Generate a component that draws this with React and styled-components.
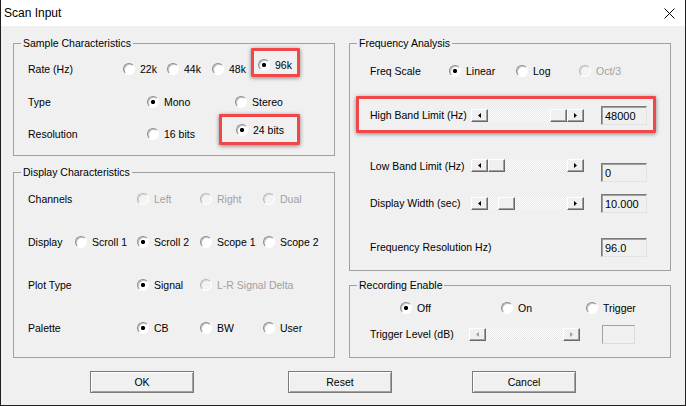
import React from "react";
import styled, { createGlobalStyle } from "styled-components";

const GlobalStyle = createGlobalStyle`
  html, body { margin: 0; padding: 0; background: #fff; }
  body {
    font-family: "Liberation Sans", Arial, sans-serif;
    font-size: 10.5px;
    color: #000;
  }
  * { box-sizing: border-box; }
`;

const Window = styled.div`
  width: 686px;
  height: 406px;
  border: 1px solid #1f1f1f;
  border-top: none;
  display: flex;
  flex-direction: column;
  background: #f0f0f0;
`;

const TitleBar = styled.div`
  height: 26px;
  flex: none;
  background: #fff;
  display: flex;
  align-items: center;
  justify-content: space-between;
  padding: 0 10px 0 3px;
  font-size: 12px;
`;

const Body = styled.div`
  flex: 1;
  display: flex;
  flex-direction: column;
  padding: 10px 13px 0 12px;
`;

const Columns = styled.div`
  display: grid;
  grid-template-columns: 322px 322px;
  column-gap: 14px;
  align-items: start;
`;

const Column = styled.div`
  display: flex;
  flex-direction: column;
`;

const Group = styled.fieldset`
  margin: ${(p) => p.$mt || 0}px 0 0;
  padding: 0;
  border: 1px solid #a0a0a0;
  min-width: 0;
`;

const Legend = styled.legend`
  margin-left: 7px;
  padding: 0 2px;
  line-height: 14px;
  font-size: 10.5px;
`;

const GroupBody = styled.div`
  display: flex;
  flex-direction: column;
  gap: ${(p) => p.$gap}px;
  padding: ${(p) => p.$pad};
`;

const Row = styled.div`
  display: grid;
  grid-template-columns: ${(p) => p.$cols};
  height: 20px;
  align-items: center;
  justify-items: start;
`;

const Label = styled.span`
  white-space: nowrap;
  color: ${(p) => (p.$off ? "#a0a0a0" : "#000")};
`;

const Option = styled.label`
  display: inline-flex;
  align-items: center;
  gap: 5px;
  white-space: nowrap;
  color: ${(p) => (p.$off ? "#a0a0a0" : "#000")};
`;

const Dot = styled.span`
  width: 12px;
  height: 12px;
  flex: none;
  border-radius: 50%;
  border: 1px solid;
  border-color: ${(p) => (p.$off ? "#b4b4b4 #fff #fff #b4b4b4" : "#8c8c8c #fff #fff #8c8c8c")};
  box-shadow: inset 1px 1px ${(p) => (p.$off ? "#dcdcdc" : "#c4c4c4")};
  background: ${(p) =>
    p.$on
      ? `radial-gradient(circle, #000 0 1.8px, #fff 2.4px)`
      : p.$off
      ? "#f4f4f4"
      : "#fff"};
`;

const Highlight = styled.div`
  position: relative;
  justify-self: start;
  align-self: flex-start;
  &::after {
    content: "";
    position: absolute;
    top: ${(p) => p.$t}px;
    right: ${(p) => p.$r}px;
    bottom: ${(p) => p.$b}px;
    left: ${(p) => p.$l}px;
    border: 3px solid #f04848;
    border-radius: 1px;
    box-shadow: 0 1px 4px rgba(0, 0, 0, 0.45);
    pointer-events: none;
  }
`;

const Scroll = styled.div`
  display: flex;
  width: 100%;
  height: 13px;
`;

const raised = `
  background: #f0f0f0;
  border: 1px solid;
  border-color: #fff #696969 #696969 #fff;
  box-shadow: inset -1px -1px #a0a0a0;
`;

const Arrow = styled.div`
  ${raised}
  width: 17px;
  flex: none;
  display: flex;
  align-items: center;
  justify-content: center;
`;

const Track = styled.div`
  flex: 1;
  display: flex;
  background: repeating-conic-gradient(#fff 0 25%, #e6e6e6 0 50%) 0 0 / 2px 2px;
`;

const Thumb = styled.div`
  ${raised}
  width: 17px;
  flex: none;
  margin-left: calc((100% - 17px) * ${(p) => p.$pos});
`;

const Edit = styled.div`
  width: 100%;
  height: 19px;
  margin-top: ${(p) => p.$drop || 0}px;
  padding: 2px 0 0 3px;
  background: #f0f0f0;
  border: 1px solid;
  border-color: ${(p) => (p.$off ? "#a0a0a0 #dcdcdc #dcdcdc #a0a0a0" : "#7a7a7a #e3e3e3 #e3e3e3 #7a7a7a")};
  box-shadow: ${(p) => (p.$off ? "none" : "inset 1px 1px #a0a0a0")};
  font-size: 11px;
  line-height: 14px;
`;

const ButtonBar = styled.div`
  display: grid;
  grid-template-columns: 198px 184px 104px;
  margin-top: 13px;
  padding-left: 77px;
`;

const Button = styled.button`
  width: 104px;
  height: 22px;
  padding: 0;
  font-family: inherit;
  font-size: 10.5px;
  color: #000;
  background: #f0f0f0;
  border: 1px solid #7a7a7a;
  box-shadow: inset 1px 1px #fff, inset -1px -1px #a0a0a0;
`;

const Tri = ({ dir, off }) => (
  <svg width="3" height="5" viewBox="0 0 3 5">
    <polygon
      points={dir === "left" ? "3,0 0,2.5 3,5" : "0,0 3,2.5 0,5"}
      fill={off ? "#a0a0a0" : "#000"}
    />
  </svg>
);

const Slider = ({ pos, off }) => (
  <Scroll>
    <Arrow>
      <Tri dir="left" off={off} />
    </Arrow>
    <Track>{!off && <Thumb $pos={pos} />}</Track>
    <Arrow>
      <Tri dir="right" off={off} />
    </Arrow>
  </Scroll>
);

const Radio = ({ on, off, children }) => (
  <Option $off={off}>
    <Dot $on={on} $off={off} />
    {children}
  </Option>
);

const CloseIcon = () => (
  <svg width="11" height="11" viewBox="0 0 11 11">
    <path d="M0.5 0.5 L10.5 10.5 M10.5 0.5 L0.5 10.5" stroke="#000" strokeWidth="1" />
  </svg>
);

export default function App() {
  return (
    <>
      <GlobalStyle />
      <Window>
        <TitleBar>
          <span>Scan Input</span>
          <CloseIcon />
        </TitleBar>
        <Body>
          <Columns>
            <Column>
              <Group>
                <Legend>Sample Characteristics</Legend>
                <GroupBody $gap={12.5} $pad="9px 0 11px 14px">
                  <Row $cols="95px 44px 45px 46px auto">
                    <Label>Rate (Hz)</Label>
                    <Radio>22k</Radio>
                    <Radio>44k</Radio>
                    <Radio>48k</Radio>
                    <Highlight $t={-11} $r={-8} $b={-4} $l={-7}>
                      <Radio on>96k</Radio>
                    </Highlight>
                  </Row>
                  <Row $cols="119px 88px auto">
                    <Label>Type</Label>
                    <Radio on>Mono</Radio>
                    <Radio>Stereo</Radio>
                  </Row>
                  <Row $cols="119px 89px auto">
                    <Label>Resolution</Label>
                    <Radio>16 bits</Radio>
                    <Highlight $t={-10} $r={-16} $b={-7} $l={-17}>
                      <Radio on>24 bits</Radio>
                    </Highlight>
                  </Row>
                </GroupBody>
              </Group>

              <Group $mt={9}>
                <Legend>Display Characteristics</Legend>
                <GroupBody $gap={23} $pad="10px 0 19px 14px">
                  <Row $cols="109px 63px 63px auto">
                    <Label>Channels</Label>
                    <Radio off>Left</Radio>
                    <Radio off>Right</Radio>
                    <Radio off>Dual</Radio>
                  </Row>
                  <Row $cols="47px 62px 63px 63px auto">
                    <Label>Display</Label>
                    <Radio>Scroll 1</Radio>
                    <Radio on>Scroll 2</Radio>
                    <Radio>Scope 1</Radio>
                    <Radio>Scope 2</Radio>
                  </Row>
                  <Row $cols="109px 63px auto">
                    <Label>Plot Type</Label>
                    <Radio on>Signal</Radio>
                    <Radio off>L-R Signal Delta</Radio>
                  </Row>
                  <Row $cols="109px 63px 63px auto">
                    <Label>Palette</Label>
                    <Radio on>CB</Radio>
                    <Radio>BW</Radio>
                    <Radio>User</Radio>
                  </Row>
                </GroupBody>
              </Group>
            </Column>

            <Column>
              <Group>
                <Legend>Frequency Analysis</Legend>
                <GroupBody $gap={24} $pad="11px 0 13px 20px">
                  <Row $cols="79px 67px 63px auto">
                    <Label>Freq Scale</Label>
                    <Radio on>Linear</Radio>
                    <Radio>Log</Radio>
                    <Radio off>Oct/3</Radio>
                  </Row>
                  <Highlight $t={-9} $r={-9} $b={-8} $l={-14}>
                    <Row $cols="101px 113px 17px 46px">
                      <Label>High Band Limit (Hz)</Label>
                      <Slider pos={1} />
                      <span />
                      <Edit>48000</Edit>
                    </Row>
                  </Highlight>
                  <Row $cols="101px 113px 17px 46px">
                    <Label>Low Band Limit (Hz)</Label>
                    <Slider pos={0} />
                    <span />
                    <Edit $drop={14}>0</Edit>
                  </Row>
                  <Row $cols="101px 113px 17px 46px">
                    <Label>Display Width (sec)</Label>
                    <Slider pos={0.16} />
                    <span />
                    <Edit>10.000</Edit>
                  </Row>
                  <Row $cols="231px 46px">
                    <Label>Frequency Resolution Hz)</Label>
                    <Edit>96.0</Edit>
                  </Row>
                </GroupBody>
              </Group>

              <Group $mt={7}>
                <Legend>Recording Enable</Legend>
                <GroupBody $gap={6} $pad="6px 0 13px 20px">
                  <Row $cols="30px 101px 85px auto">
                    <span />
                    <Radio on>Off</Radio>
                    <Radio>On</Radio>
                    <Radio>Trigger</Radio>
                  </Row>
                  <Row $cols="99px 111px 22px 33px">
                    <Label>Trigger Level (dB)</Label>
                    <Slider off />
                    <span />
                    <Edit $off />
                  </Row>
                </GroupBody>
              </Group>
            </Column>
          </Columns>

          <ButtonBar>
            <Button>OK</Button>
            <Button>Reset</Button>
            <Button>Cancel</Button>
          </ButtonBar>
        </Body>
      </Window>
    </>
  );
}
